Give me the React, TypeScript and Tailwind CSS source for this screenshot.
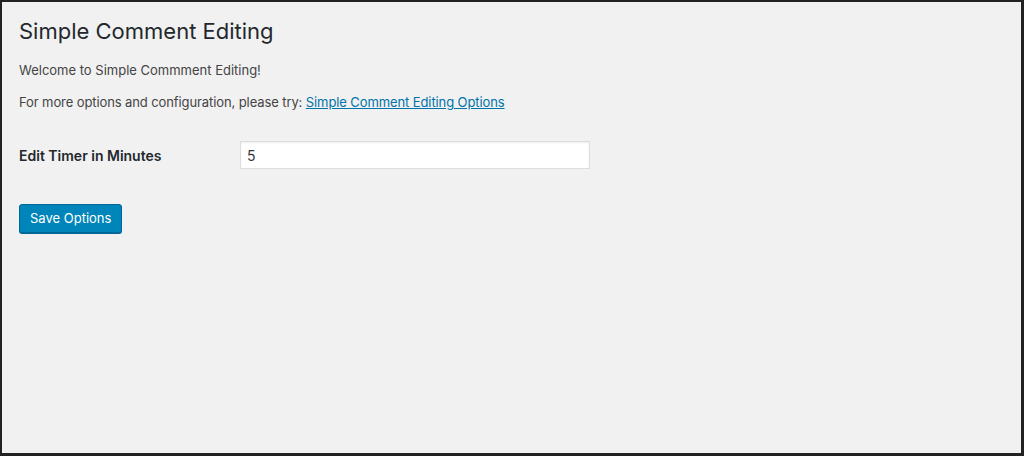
export default function App() {
  const font = { fontFamily: 'Inter, "Liberation Sans", Arial, sans-serif' };

  return (
    <div
      className="w-[1024px] h-[456px] bg-[#f1f1f1] border-t-2 border-l-2 border-r-[3px] border-b-[3px] border-[#222] text-[#23282d] overflow-hidden"
      style={font}
    >
      <div className="pl-[17px] pt-[15px]">
        <h1 className="text-[22px] leading-[29px] font-normal text-[#23282d]">Simple Comment Editing</h1>
        <p className="text-[13px] leading-[19px] mt-[15px] text-[#444]">Welcome to Simple Commment Editing!</p>
        <p className="text-[13px] leading-[19px] mt-[13px] text-[#444] tracking-[-0.1px]">
          For more options and configuration, please try:{" "}
          <a href="#" className="text-[#0073aa] underline">
            Simple Comment Editing Options
          </a>
        </p>
        <div className="flex items-center mt-[29px]">
          <label className="w-[221px] text-[14px] font-semibold text-[#23282d]">Edit Timer in Minutes</label>
          <input
            type="text"
            defaultValue="5"
            className="w-[350px] h-[28px] bg-white border border-[#ddd] shadow-[inset_0_1px_2px_rgba(0,0,0,0.07)] px-[6px] text-[14px] text-[#32373c] outline-none"
          />
        </div>
        <button className="mt-[35px] h-[29px] px-[10px] bg-[#0085ba] border border-[#006799] rounded-[3px] text-white text-[13px] shadow-[0_1px_0_#006799]">
          Save Options
        </button>
      </div>
    </div>
  );
}
